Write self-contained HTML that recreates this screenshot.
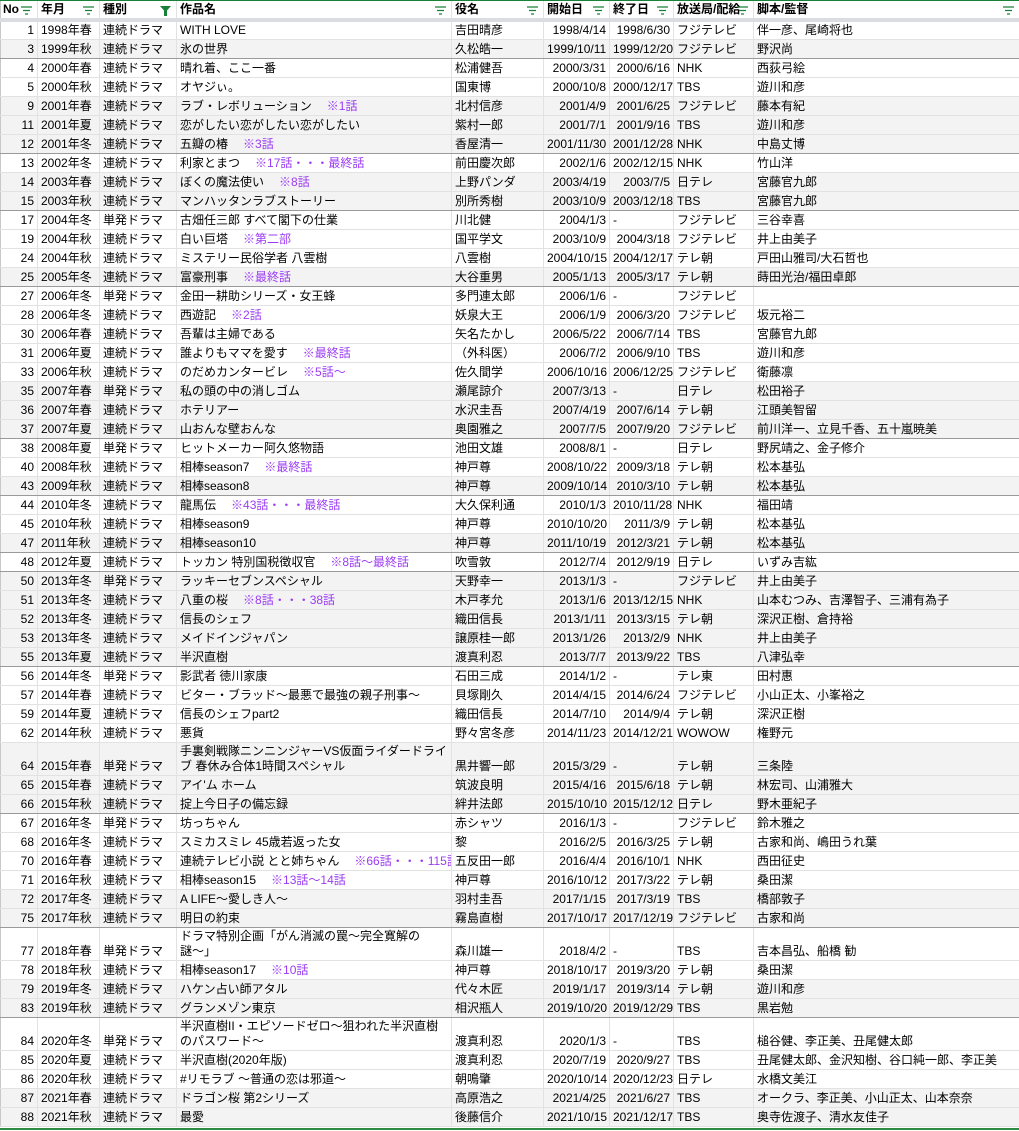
<!DOCTYPE html>
<html><head><meta charset="utf-8">
<style>
html,body{margin:0;padding:0;background:#fff;}
body{width:1019px;height:1131px;overflow:hidden;position:relative;font-family:"Liberation Sans","Noto Sans CJK JP",sans-serif;font-size:12px;color:#000;}
table{border-collapse:collapse;table-layout:fixed;width:1019px;position:absolute;left:0;top:1px;}
td{padding:0 3px;white-space:nowrap;overflow:hidden;border-right:1px solid #e2e2e2;border-bottom:1px solid #e2e2e2;height:18px;line-height:15px;vertical-align:bottom;padding-bottom:1px;box-sizing:border-box;}
td:first-child{border-left:1px solid #c8c8c8;}
td:nth-child(1),td:nth-child(6),td:nth-child(7){text-align:right;}
tr.g td{background:#f3f3f3;}
tr.s td{border-bottom:1px solid #9a9a9a;}
tr.d td{height:33px;}
tr.d td:nth-child(4){white-space:normal;line-height:15px;}
tr.h td{height:19px;font-weight:bold;position:relative;border-bottom:4px solid #dadce0;vertical-align:middle;padding-bottom:0;}
tr.h svg{position:absolute;right:5px;top:5px;}
tr.h td:first-child{padding:0 0 0 2px;}
tr td.e{text-align:left;}
span.n{color:#9c3cf4;margin-left:15px;}
tr.r td{height:19px;}
#top{position:absolute;left:0;top:0;width:1019px;height:1px;background:#188038;}
#bot{position:absolute;left:0;top:1128px;width:1019px;height:2px;background:#2e8b44;}
</style></head><body>
<div id="top"></div>
<table>
<colgroup><col style="width:37px"><col style="width:62px"><col style="width:77px"><col style="width:275px"><col style="width:92px"><col style="width:66px"><col style="width:64px"><col style="width:80px"><col style="width:266px"></colgroup>
<tr class="h">
<td style="text-align:left">No<svg width="11" height="9"><path d="M0 1h11M2 4.5h7M4 8h3" stroke="#188038" stroke-width="1.3"/></svg></td>
<td>年月<svg width="11" height="9"><path d="M0 1h11M2 4.5h7M4 8h3" stroke="#188038" stroke-width="1.3"/></svg></td>
<td>種別<svg width="11" height="10"><path d="M0 0h11L7 4.5V10H4V4.5Z" fill="#188038"/></svg></td>
<td>作品名<svg width="11" height="9"><path d="M0 1h11M2 4.5h7M4 8h3" stroke="#188038" stroke-width="1.3"/></svg></td>
<td>役名<svg width="11" height="9"><path d="M0 1h11M2 4.5h7M4 8h3" stroke="#188038" stroke-width="1.3"/></svg></td>
<td style="text-align:left">開始日<svg width="11" height="9"><path d="M0 1h11M2 4.5h7M4 8h3" stroke="#188038" stroke-width="1.3"/></svg></td>
<td style="text-align:left">終了日<svg width="11" height="9"><path d="M0 1h11M2 4.5h7M4 8h3" stroke="#188038" stroke-width="1.3"/></svg></td>
<td>放送局/配給<svg width="11" height="9"><path d="M0 1h11M2 4.5h7M4 8h3" stroke="#188038" stroke-width="1.3"/></svg></td>
<td>脚本/監督<svg width="11" height="9"><path d="M0 1h11M2 4.5h7M4 8h3" stroke="#188038" stroke-width="1.3"/></svg></td>
</tr>
<tr class="r"><td>1</td><td>1998年春</td><td>連続ドラマ</td><td>WITH LOVE</td><td>吉田晴彦</td><td>1998/4/14</td><td>1998/6/30</td><td>フジテレビ</td><td>伴一彦、尾崎将也</td></tr>
<tr class="r g s"><td>3</td><td>1999年秋</td><td>連続ドラマ</td><td>氷の世界</td><td>久松皓一</td><td>1999/10/11</td><td>1999/12/20</td><td>フジテレビ</td><td>野沢尚</td></tr>
<tr class="r"><td>4</td><td>2000年春</td><td>連続ドラマ</td><td>晴れ着、ここ一番</td><td>松浦健吾</td><td>2000/3/31</td><td>2000/6/16</td><td>NHK</td><td>西荻弓絵</td></tr>
<tr class="r"><td>5</td><td>2000年秋</td><td>連続ドラマ</td><td>オヤジぃ。</td><td>国東博</td><td>2000/10/8</td><td>2000/12/17</td><td>TBS</td><td>遊川和彦</td></tr>
<tr class="r g"><td>9</td><td>2001年春</td><td>連続ドラマ</td><td>ラブ・レボリューション<span class="n">※1話</span></td><td>北村信彦</td><td>2001/4/9</td><td>2001/6/25</td><td>フジテレビ</td><td>藤本有紀</td></tr>
<tr class="r g"><td>11</td><td>2001年夏</td><td>連続ドラマ</td><td>恋がしたい恋がしたい恋がしたい</td><td>紫村一郎</td><td>2001/7/1</td><td>2001/9/16</td><td>TBS</td><td>遊川和彦</td></tr>
<tr class="r g s"><td>12</td><td>2001年冬</td><td>連続ドラマ</td><td>五瓣の椿<span class="n">※3話</span></td><td>香屋清一</td><td>2001/11/30</td><td>2001/12/28</td><td>NHK</td><td>中島丈博</td></tr>
<tr class="r"><td>13</td><td>2002年冬</td><td>連続ドラマ</td><td>利家とまつ<span class="n">※17話・・・最終話</span></td><td>前田慶次郎</td><td>2002/1/6</td><td>2002/12/15</td><td>NHK</td><td>竹山洋</td></tr>
<tr class="r g"><td>14</td><td>2003年春</td><td>連続ドラマ</td><td>ぼくの魔法使い<span class="n">※8話</span></td><td>上野パンダ</td><td>2003/4/19</td><td>2003/7/5</td><td>日テレ</td><td>宮藤官九郎</td></tr>
<tr class="r g s"><td>15</td><td>2003年秋</td><td>連続ドラマ</td><td>マンハッタンラブストーリー</td><td>別所秀樹</td><td>2003/10/9</td><td>2003/12/18</td><td>TBS</td><td>宮藤官九郎</td></tr>
<tr class="r"><td>17</td><td>2004年冬</td><td>単発ドラマ</td><td>古畑任三郎 すべて閣下の仕業</td><td>川北健</td><td>2004/1/3</td><td class="e">-</td><td>フジテレビ</td><td>三谷幸喜</td></tr>
<tr class="r"><td>19</td><td>2004年秋</td><td>連続ドラマ</td><td>白い巨塔<span class="n">※第二部</span></td><td>国平学文</td><td>2003/10/9</td><td>2004/3/18</td><td>フジテレビ</td><td>井上由美子</td></tr>
<tr class="r"><td>24</td><td>2004年秋</td><td>連続ドラマ</td><td>ミステリー民俗学者 八雲樹</td><td>八雲樹</td><td>2004/10/15</td><td>2004/12/17</td><td>テレ朝</td><td>戸田山雅司/大石哲也</td></tr>
<tr class="r g s"><td>25</td><td>2005年冬</td><td>連続ドラマ</td><td>富豪刑事<span class="n">※最終話</span></td><td>大谷重男</td><td>2005/1/13</td><td>2005/3/17</td><td>テレ朝</td><td>蒔田光治/福田卓郎</td></tr>
<tr class="r"><td>27</td><td>2006年冬</td><td>単発ドラマ</td><td>金田一耕助シリーズ・女王蜂</td><td>多門連太郎</td><td>2006/1/6</td><td class="e">-</td><td>フジテレビ</td><td></td></tr>
<tr class="r"><td>28</td><td>2006年冬</td><td>連続ドラマ</td><td>西遊記<span class="n">※2話</span></td><td>妖泉大王</td><td>2006/1/9</td><td>2006/3/20</td><td>フジテレビ</td><td>坂元裕二</td></tr>
<tr class="r"><td>30</td><td>2006年春</td><td>連続ドラマ</td><td>吾輩は主婦である</td><td>矢名たかし</td><td>2006/5/22</td><td>2006/7/14</td><td>TBS</td><td>宮藤官九郎</td></tr>
<tr class="r"><td>31</td><td>2006年夏</td><td>連続ドラマ</td><td>誰よりもママを愛す<span class="n">※最終話</span></td><td>（外科医）</td><td>2006/7/2</td><td>2006/9/10</td><td>TBS</td><td>遊川和彦</td></tr>
<tr class="r"><td>33</td><td>2006年秋</td><td>連続ドラマ</td><td>のだめカンタービレ<span class="n">※5話〜</span></td><td>佐久間学</td><td>2006/10/16</td><td>2006/12/25</td><td>フジテレビ</td><td>衛藤凛</td></tr>
<tr class="r g"><td>35</td><td>2007年春</td><td>単発ドラマ</td><td>私の頭の中の消しゴム</td><td>瀬尾諒介</td><td>2007/3/13</td><td class="e">-</td><td>日テレ</td><td>松田裕子</td></tr>
<tr class="r g"><td>36</td><td>2007年春</td><td>連続ドラマ</td><td>ホテリアー</td><td>水沢圭吾</td><td>2007/4/19</td><td>2007/6/14</td><td>テレ朝</td><td>江頭美智留</td></tr>
<tr class="r g s"><td>37</td><td>2007年夏</td><td>連続ドラマ</td><td>山おんな壁おんな</td><td>奥園雅之</td><td>2007/7/5</td><td>2007/9/20</td><td>フジテレビ</td><td>前川洋一、立見千香、五十嵐暁美</td></tr>
<tr class="r"><td>38</td><td>2008年夏</td><td>単発ドラマ</td><td>ヒットメーカー阿久悠物語</td><td>池田文雄</td><td>2008/8/1</td><td class="e">-</td><td>日テレ</td><td>野尻靖之、金子修介</td></tr>
<tr class="r"><td>40</td><td>2008年秋</td><td>連続ドラマ</td><td>相棒season7<span class="n">※最終話</span></td><td>神戸尊</td><td>2008/10/22</td><td>2009/3/18</td><td>テレ朝</td><td>松本基弘</td></tr>
<tr class="r g s"><td>43</td><td>2009年秋</td><td>連続ドラマ</td><td>相棒season8</td><td>神戸尊</td><td>2009/10/14</td><td>2010/3/10</td><td>テレ朝</td><td>松本基弘</td></tr>
<tr class="r"><td>44</td><td>2010年冬</td><td>連続ドラマ</td><td>龍馬伝<span class="n">※43話・・・最終話</span></td><td>大久保利通</td><td>2010/1/3</td><td>2010/11/28</td><td>NHK</td><td>福田靖</td></tr>
<tr class="r"><td>45</td><td>2010年秋</td><td>連続ドラマ</td><td>相棒season9</td><td>神戸尊</td><td>2010/10/20</td><td>2011/3/9</td><td>テレ朝</td><td>松本基弘</td></tr>
<tr class="r g s"><td>47</td><td>2011年秋</td><td>連続ドラマ</td><td>相棒season10</td><td>神戸尊</td><td>2011/10/19</td><td>2012/3/21</td><td>テレ朝</td><td>松本基弘</td></tr>
<tr class="r s"><td>48</td><td>2012年夏</td><td>連続ドラマ</td><td>トッカン 特別国税徴収官<span class="n">※8話〜最終話</span></td><td>吹雪敦</td><td>2012/7/4</td><td>2012/9/19</td><td>日テレ</td><td>いずみ吉紘</td></tr>
<tr class="r g"><td>50</td><td>2013年冬</td><td>単発ドラマ</td><td>ラッキーセブンスペシャル</td><td>天野幸一</td><td>2013/1/3</td><td class="e">-</td><td>フジテレビ</td><td>井上由美子</td></tr>
<tr class="r g"><td>51</td><td>2013年冬</td><td>連続ドラマ</td><td>八重の桜<span class="n">※8話・・・38話</span></td><td>木戸孝允</td><td>2013/1/6</td><td>2013/12/15</td><td>NHK</td><td>山本むつみ、吉澤智子、三浦有為子</td></tr>
<tr class="r g"><td>52</td><td>2013年冬</td><td>連続ドラマ</td><td>信長のシェフ</td><td>織田信長</td><td>2013/1/11</td><td>2013/3/15</td><td>テレ朝</td><td>深沢正樹、倉持裕</td></tr>
<tr class="r g"><td>53</td><td>2013年冬</td><td>連続ドラマ</td><td>メイドインジャパン</td><td>譲原桂一郎</td><td>2013/1/26</td><td>2013/2/9</td><td>NHK</td><td>井上由美子</td></tr>
<tr class="r g s"><td>55</td><td>2013年夏</td><td>連続ドラマ</td><td>半沢直樹</td><td>渡真利忍</td><td>2013/7/7</td><td>2013/9/22</td><td>TBS</td><td>八津弘幸</td></tr>
<tr class="r"><td>56</td><td>2014年冬</td><td>単発ドラマ</td><td>影武者 徳川家康</td><td>石田三成</td><td>2014/1/2</td><td class="e">-</td><td>テレ東</td><td>田村惠</td></tr>
<tr class="r"><td>57</td><td>2014年春</td><td>連続ドラマ</td><td>ビター・ブラッド〜最悪で最強の親子刑事〜</td><td>貝塚剛久</td><td>2014/4/15</td><td>2014/6/24</td><td>フジテレビ</td><td>小山正太、小峯裕之</td></tr>
<tr class="r"><td>59</td><td>2014年夏</td><td>連続ドラマ</td><td>信長のシェフpart2</td><td>織田信長</td><td>2014/7/10</td><td>2014/9/4</td><td>テレ朝</td><td>深沢正樹</td></tr>
<tr class="r"><td>62</td><td>2014年秋</td><td>連続ドラマ</td><td>悪貨</td><td>野々宮冬彦</td><td>2014/11/23</td><td>2014/12/21</td><td>WOWOW</td><td>権野元</td></tr>
<tr class="d g"><td>64</td><td>2015年春</td><td>単発ドラマ</td><td>手裏剣戦隊ニンニンジャーVS仮面ライダードライ<br>ブ 春休み合体1時間スペシャル</td><td>黒井響一郎</td><td>2015/3/29</td><td class="e">-</td><td>テレ朝</td><td>三条陸</td></tr>
<tr class="r g"><td>65</td><td>2015年春</td><td>連続ドラマ</td><td>アイ'ム ホーム</td><td>筑波良明</td><td>2015/4/16</td><td>2015/6/18</td><td>テレ朝</td><td>林宏司、山浦雅大</td></tr>
<tr class="r g s"><td>66</td><td>2015年秋</td><td>連続ドラマ</td><td>掟上今日子の備忘録</td><td>絆井法郎</td><td>2015/10/10</td><td>2015/12/12</td><td>日テレ</td><td>野木亜紀子</td></tr>
<tr class="r"><td>67</td><td>2016年冬</td><td>単発ドラマ</td><td>坊っちゃん</td><td>赤シャツ</td><td>2016/1/3</td><td class="e">-</td><td>フジテレビ</td><td>鈴木雅之</td></tr>
<tr class="r"><td>68</td><td>2016年冬</td><td>連続ドラマ</td><td>スミカスミレ 45歳若返った女</td><td>黎</td><td>2016/2/5</td><td>2016/3/25</td><td>テレ朝</td><td>古家和尚、嶋田うれ葉</td></tr>
<tr class="r"><td>70</td><td>2016年春</td><td>連続ドラマ</td><td>連続テレビ小説 とと姉ちゃん<span class="n">※66話・・・115話</span></td><td>五反田一郎</td><td>2016/4/4</td><td>2016/10/1</td><td>NHK</td><td>西田征史</td></tr>
<tr class="r"><td>71</td><td>2016年秋</td><td>連続ドラマ</td><td>相棒season15<span class="n">※13話〜14話</span></td><td>神戸尊</td><td>2016/10/12</td><td>2017/3/22</td><td>テレ朝</td><td>桑田潔</td></tr>
<tr class="r g"><td>72</td><td>2017年冬</td><td>連続ドラマ</td><td>A LIFE〜愛しき人〜</td><td>羽村圭吾</td><td>2017/1/15</td><td>2017/3/19</td><td>TBS</td><td>橋部敦子</td></tr>
<tr class="r g s"><td>75</td><td>2017年秋</td><td>連続ドラマ</td><td>明日の約束</td><td>霧島直樹</td><td>2017/10/17</td><td>2017/12/19</td><td>フジテレビ</td><td>古家和尚</td></tr>
<tr class="d"><td>77</td><td>2018年春</td><td>単発ドラマ</td><td>ドラマ特別企画「がん消滅の罠〜完全寛解の<br>謎〜」</td><td>森川雄一</td><td>2018/4/2</td><td class="e">-</td><td>TBS</td><td>吉本昌弘、船橋 勧</td></tr>
<tr class="r"><td>78</td><td>2018年秋</td><td>連続ドラマ</td><td>相棒season17<span class="n">※10話</span></td><td>神戸尊</td><td>2018/10/17</td><td>2019/3/20</td><td>テレ朝</td><td>桑田潔</td></tr>
<tr class="r g"><td>79</td><td>2019年冬</td><td>連続ドラマ</td><td>ハケン占い師アタル</td><td>代々木匠</td><td>2019/1/17</td><td>2019/3/14</td><td>テレ朝</td><td>遊川和彦</td></tr>
<tr class="r g s"><td>83</td><td>2019年秋</td><td>連続ドラマ</td><td>グランメゾン東京</td><td>相沢瓶人</td><td>2019/10/20</td><td>2019/12/29</td><td>TBS</td><td>黒岩勉</td></tr>
<tr class="d"><td>84</td><td>2020年冬</td><td>単発ドラマ</td><td>半沢直樹II・エピソードゼロ〜狙われた半沢直樹<br>のパスワード〜</td><td>渡真利忍</td><td>2020/1/3</td><td class="e">-</td><td>TBS</td><td>槌谷健、李正美、丑尾健太郎</td></tr>
<tr class="r"><td>85</td><td>2020年夏</td><td>連続ドラマ</td><td>半沢直樹(2020年版)</td><td>渡真利忍</td><td>2020/7/19</td><td>2020/9/27</td><td>TBS</td><td>丑尾健太郎、金沢知樹、谷口純一郎、李正美</td></tr>
<tr class="r"><td>86</td><td>2020年秋</td><td>連続ドラマ</td><td>#リモラブ 〜普通の恋は邪道〜</td><td>朝鳴肇</td><td>2020/10/14</td><td>2020/12/23</td><td>日テレ</td><td>水橋文美江</td></tr>
<tr class="r g"><td>87</td><td>2021年春</td><td>連続ドラマ</td><td>ドラゴン桜 第2シリーズ</td><td>高原浩之</td><td>2021/4/25</td><td>2021/6/27</td><td>TBS</td><td>オークラ、李正美、小山正太、山本奈奈</td></tr>
<tr class="r g"><td>88</td><td>2021年秋</td><td>連続ドラマ</td><td>最愛</td><td>後藤信介</td><td>2021/10/15</td><td>2021/12/17</td><td>TBS</td><td>奥寺佐渡子、清水友佳子</td></tr>
</table>
<div id="bot"></div>
</body></html>
